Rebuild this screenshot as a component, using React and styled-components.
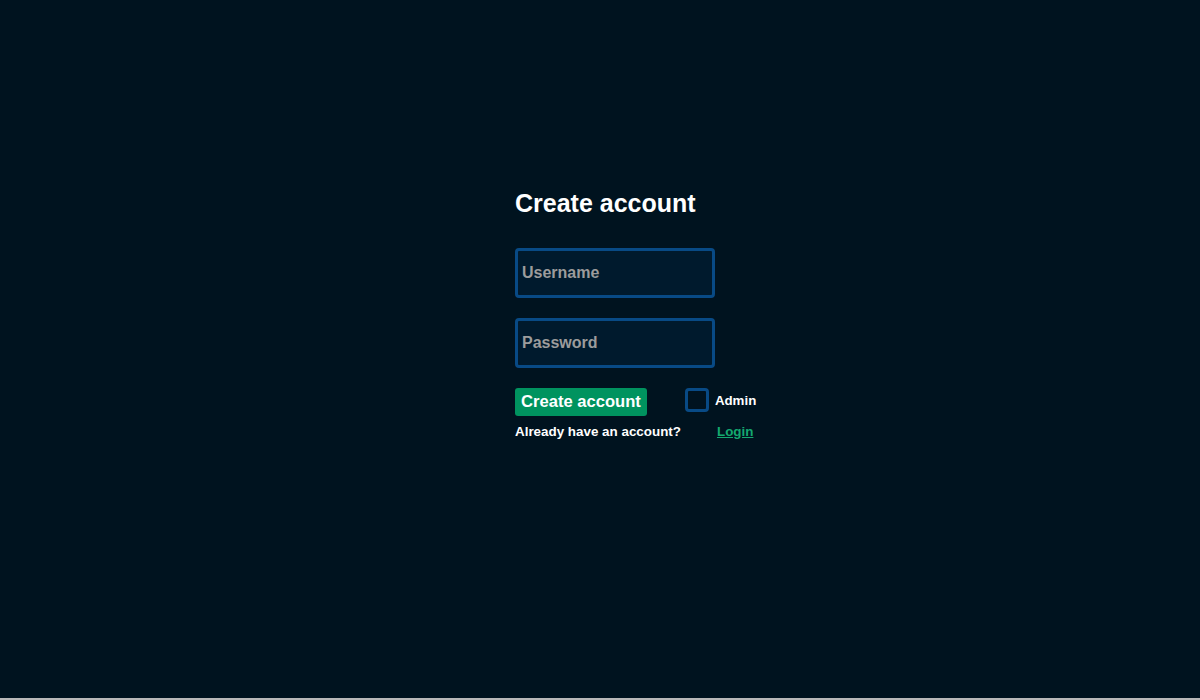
import React from "react";
import styled, { createGlobalStyle } from "styled-components";

const Global = createGlobalStyle`
  html, body { margin: 0; padding: 0; background: #b9b9b9; }
  body { font-family: "Liberation Sans", Arial, sans-serif; }
  * { box-sizing: border-box; }
`;

const Page = styled.main`
  height: 698px;
  background: #00131f;
  padding: 188px 0 0 515px;
`;

const Form = styled.form`
  display: flex;
  flex-direction: column;
  align-items: flex-start;
  width: 260px;
`;

const Title = styled.h1`
  margin: 0 0 30px;
  font-size: 25px;
  line-height: 30px;
  font-weight: 700;
  color: #ffffff;
`;

const Field = styled.input`
  width: 200px;
  height: 50px;
  margin-bottom: 20px;
  padding: 0 4px;
  background: #001a2d;
  border: 3px solid #084a85;
  border-radius: 4px;
  color: #ffffff;
  font-family: inherit;
  font-size: 16px;
  font-weight: 700;
  outline: none;
  &::placeholder { color: #9c9c9c; }
`;

const Row = styled.div`
  display: flex;
  align-items: center;
  gap: ${(p) => p.$gap}px;
  margin-top: ${(p) => p.$top || 0}px;
`;

const Submit = styled.button`
  height: 28px;
  padding: 0 6px;
  border: none;
  border-radius: 3px;
  background: #00935f;
  color: #ffffff;
  font-family: inherit;
  font-size: 16.6px;
  font-weight: 700;
  cursor: pointer;
`;

const CheckLabel = styled.label`
  display: flex;
  align-items: center;
  gap: 6px;
  color: #ffffff;
  font-size: 13.3px;
  font-weight: 700;
  margin-top: -4px;
`;

const Box = styled.span`
  display: inline-block;
  width: 24px;
  height: 24px;
  border: 3px solid #084a85;
  border-radius: 4px;
  background: #00131f;
`;

const Small = styled.span`
  color: #ffffff;
  font-size: 13.4px;
  font-weight: 700;
`;

const LoginLink = styled.a`
  color: #14a86f;
  font-size: 13.4px;
  font-weight: 700;
  text-decoration: underline;
  cursor: pointer;
`;

export default function App() {
  return (
    <>
      <Global />
      <Page>
        <Form onSubmit={(e) => e.preventDefault()}>
          <Title>Create account</Title>
          <Field placeholder="Username" />
          <Field type="password" placeholder="Password" />
          <Row $gap={38}>
            <Submit type="submit">Create account</Submit>
            <CheckLabel>
              <Box />
              Admin
            </CheckLabel>
          </Row>
          <Row $gap={36} $top={8}>
            <Small>Already have an account?</Small>
            <LoginLink>Login</LoginLink>
          </Row>
        </Form>
      </Page>
    </>
  );
}
